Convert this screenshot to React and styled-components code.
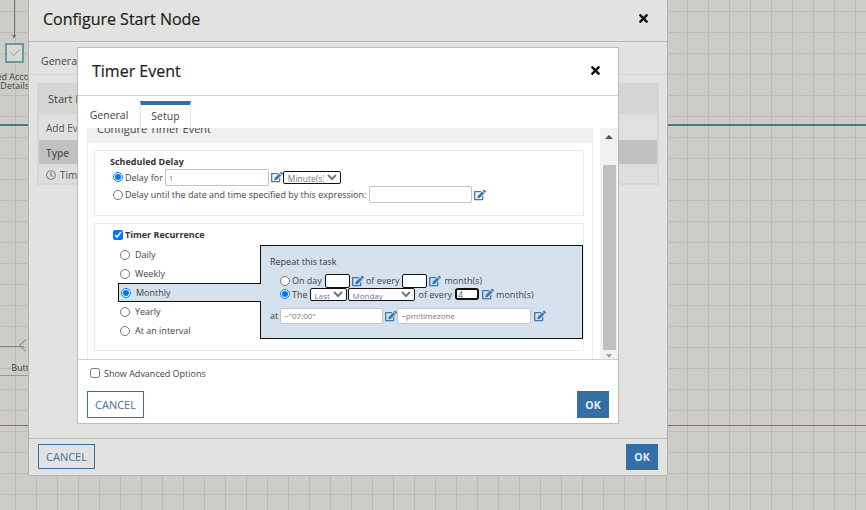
import { createGlobalStyle, styled } from 'styled-components';
import { FaEdit, FaTimes, FaRegClock } from 'react-icons/fa';
import { Check as CheckMark } from 'lucide-react';

const GlobalStyle = createGlobalStyle`
  html, body { margin: 0; padding: 0; height: 100%; overflow: hidden; }
  body { font-family: "Open Sans", "Noto Sans", sans-serif; color: #333; }
`;

const Canvas = styled.div`
  position: relative;
  width: 866px;
  height: 510px;
  overflow: hidden;
  background-color: #cdccc8;
  background-image:
    linear-gradient(to right, #bcbbb7 1px, transparent 1px),
    linear-gradient(to bottom, #bcbbb7 1px, transparent 1px);
  background-size: 21px 21px;
  background-position: 15px 11px;
`;

const Wire = styled.div`
  position: absolute;
  left: 0;
  right: 0;
  top: ${(p) => p.$top}px;
  height: ${(p) => p.$size}px;
  background: ${(p) => p.$color};
`;

const ArrowLine = styled.div`
  position: absolute;
  left: 14px;
  top: 0;
  width: 1px;
  height: 36px;
  background: #777;
  &::after {
    content: '';
    position: absolute;
    left: -2px;
    bottom: -3px;
    border-left: 2.5px solid transparent;
    border-right: 2.5px solid transparent;
    border-top: 4px solid #777;
  }
`;

const TaskNode = styled.div`
  position: absolute;
  left: 5px;
  top: 43px;
  width: 19px;
  height: 20px;
  box-sizing: border-box;
  border: 2px solid #6e98a3;
  background: #d8d8d4;
  display: flex;
  align-items: center;
  justify-content: center;
  color: #6e98a3;
`;

const NodeLabel = styled.div`
  position: absolute;
  right: ${866 - 29}px;
  top: ${(p) => p.$top}px;
  font-size: 9px;
  line-height: 9px;
  white-space: nowrap;
  color: #444;
`;

const ButtonWire = styled.div`
  position: absolute;
  left: 0;
  top: 346px;
  width: 24px;
  height: 1px;
  background: #888;
  &::after {
    content: '';
    position: absolute;
    right: -6px;
    top: -5px;
    width: 9px;
    height: 9px;
    box-sizing: border-box;
    border-left: 1px solid #888;
    border-bottom: 1px solid #888;
    transform: rotate(45deg);
  }
`;

const ButtonUnderline = styled.div`
  position: absolute;
  left: 0;
  top: 375px;
  width: 29px;
  height: 1px;
  background: #999;
`;

const OuterDialog = styled.section`
  position: absolute;
  left: 28px;
  top: -1px;
  width: 640px;
  height: 477px;
  box-sizing: border-box;
  border: 1px solid #b4b4b2;
  background: #e2e2e0;
  display: flex;
  flex-direction: column;
`;

const OuterHeader = styled.header`
  height: 42px;
  flex: none;
  box-sizing: border-box;
  border-bottom: 1px solid #b9b9b7;
  padding: 0 17px 4px 14px;
  display: flex;
  align-items: center;
  justify-content: space-between;
`;

const DialogTitle = styled.h2`
  margin: 0;
  font-size: 16px;
  font-weight: 400;
  color: #222;
  -webkit-text-stroke: 0.2px #222;
`;

const CloseIcon = styled.span`
  display: flex;
  color: #111;
  font-size: 13px;
`;

const OuterTabs = styled.div`
  height: 33px;
  flex: none;
  box-sizing: border-box;
  border-bottom: 1px solid #d2d2d0;
  padding: 6px 0 0 12px;
  font-size: 10.5px;
  line-height: 27px;
  color: #444;
`;

const OuterBody = styled.div`
  flex: 1;
  padding: 8px 8px 0;
`;

const EventsPanel = styled.div`
  height: 102px;
  box-sizing: border-box;
  background: #d5d5d3;
  padding: 0 2px 2px;
  display: flex;
  flex-direction: column;
  font-size: 10px;
  color: #555;
`;

const EventsTitle = styled.div`
  height: 31px;
  line-height: 31px;
  padding-left: 9px;
  font-size: 11px;
  color: #444;
`;

const EventsRow = styled.div`
  height: ${(p) => p.$height}px;
  flex: none;
  box-sizing: border-box;
  padding-top: ${(p) => p.$pad}px;
  display: flex;
  align-items: center;
  gap: 4px;
  padding-left: 7px;
  background: ${(p) => p.$bg};
  font-weight: ${(p) => (p.$bold ? 600 : 400)};
  svg { color: #777; font-size: 10px; }
`;

const OuterFooter = styled.footer`
  height: 37px;
  flex: none;
  box-sizing: border-box;
  border-top: 1px solid #bcbcba;
  padding: 5px 9px 0 9px;
  display: flex;
  justify-content: space-between;
  align-items: flex-start;
`;

const CancelButton = styled.button`
  width: 57px;
  height: ${(p) => p.$height}px;
  box-sizing: border-box;
  padding: 0;
  border: 1px solid #336ea5;
  background: transparent;
  color: #476f98;
  font-family: inherit;
  font-size: 11px;
`;

const OkButton = styled.button`
  width: 32px;
  height: ${(p) => p.$height}px;
  padding: 0;
  border: 0;
  background: #336ea5;
  color: #e6eef5;
  font-family: inherit;
  font-size: 10.5px;
  font-weight: 700;
`;

const InnerDialog = styled.section`
  position: absolute;
  left: 77px;
  top: 47px;
  width: 542px;
  height: 377px;
  box-sizing: border-box;
  border: 1px solid #bcbcbc;
  background: #fff;
  display: flex;
  flex-direction: column;
`;

const InnerHeader = styled.header`
  height: 48px;
  flex: none;
  box-sizing: border-box;
  border-bottom: 1px solid #cfcfcf;
  padding: 0 16px 2px 14px;
  display: flex;
  align-items: center;
  justify-content: space-between;
`;

const TabRow = styled.nav`
  height: 32px;
  flex: none;
  display: flex;
  align-items: flex-end;
  font-size: 10.5px;
  color: #444;
`;

const Tab = styled.div`
  box-sizing: border-box;
  height: 27px;
  width: ${(p) => p.$width}px;
  text-align: center;
  line-height: ${(p) => (p.$active ? 22 : 29)}px;
  border-top: ${(p) => (p.$active ? '4px solid #336ea5' : '0')};
  border-left: ${(p) => (p.$active ? '1px solid #e4e4e4' : '0')};
  border-right: ${(p) => (p.$active ? '1px solid #e4e4e4' : '0')};
`;

const ScrollFrame = styled.div`
  height: 232px;
  flex: none;
  box-sizing: border-box;
  border-bottom: 1px solid #cfcfcf;
  display: flex;
  overflow: hidden;
  padding-left: 9px;
`;

const ScrollContent = styled.div`
  width: 506px;
  flex: none;
  box-sizing: border-box;
  border-left: 1px solid #eee;
  border-right: 1px solid #eee;
  overflow: hidden;
`;

const SectionHeading = styled.div`
  height: 23px;
  margin-top: -8px;
  line-height: 17px;
  padding-left: 9px;
  background: #f0f0f0;
  font-size: 11px;
  color: #444;
`;

const SectionBody = styled.div`
  padding: 7px 8px 0 6px;
  display: flex;
  flex-direction: column;
  gap: 7px;
`;

const Box = styled.div`
  height: ${(p) => p.$height}px;
  box-sizing: border-box;
  border: 1px solid #ececec;
`;

const BoxTitle = styled.div`
  padding-left: ${(p) => p.$indent}px;
  padding-top: ${(p) => p.$top}px;
  font-size: 9px;
  line-height: 12px;
  font-weight: 700;
  color: #333;
  display: flex;
  align-items: center;
  gap: 2px;
`;

const FieldRow = styled.div`
  height: ${(p) => p.$height}px;
  padding-left: ${(p) => p.$indent || 0}px;
  margin-top: ${(p) => p.$top || 0}px;
  display: flex;
  align-items: center;
  font-size: 9px;
  color: #444;
  white-space: nowrap;
`;

const Radio = styled.input.attrs({ type: 'radio' })`
  width: 10px;
  height: 10px;
  margin: 0 2px 0 0;
  flex: none;
`;

const Check = styled.input.attrs({ type: 'checkbox' })`
  width: 10px;
  height: 10px;
  margin: 0;
  flex: none;
`;

const TextField = styled.input.attrs({ type: 'text' })`
  box-sizing: border-box;
  width: ${(p) => p.$width}px;
  height: ${(p) => p.$height}px;
  margin-left: ${(p) => p.$left || 0}px;
  padding: 0 3px;
  border: 1px solid #c4c4c4;
  border-radius: 2px;
  background: #fff;
  font-family: inherit;
  font-size: 8px;
  color: #777;
  outline: none;
`;

const BlackField = styled(TextField)`
  border: 1px solid #111;
`;

const FocusField = styled(TextField)`
  border: 2px solid #111;
  border-radius: 3px;
  padding: 0 1px;
  font-size: 9px;
  color: #666;
`;

const EditIcon = styled.span`
  display: flex;
  margin-left: ${(p) => p.$left || 2}px;
  color: #3f79ad;
  font-size: 12px;
`;

const NativeSelect = styled.select`
  box-sizing: border-box;
  width: ${(p) => p.$width}px;
  height: ${(p) => p.$height}px;
  margin-left: ${(p) => p.$left || 0}px;
  margin-top: ${(p) => p.$top || 0}px;
  padding: 0;
  border: 1px solid #111;
  border-radius: 2px;
  background: #fff;
  font-family: inherit;
  font-size: ${(p) => p.$font || 8}px;
  color: #777;
`;

const RecurrenceBody = styled.div`
  display: flex;
  margin-top: 4px;
`;

const OptionList = styled.div`
  width: 165px;
  flex: none;
  padding-left: 23px;
  box-sizing: border-box;
`;

const Option = styled.label`
  position: relative;
  z-index: 1;
  box-sizing: border-box;
  width: ${(p) => (p.$active ? 143 : 120)}px;
  height: 19px;
  padding-left: 2px;
  display: flex;
  align-items: center;
  font-size: 9px;
  color: #444;
  ${(p) =>
    p.$active &&
    `
    background: #d5e2ee;
    border: 1px solid #111;
    border-right: 0;
  `}
  ${Radio} { margin-right: 5px; }
`;

const RepeatPanel = styled.div`
  width: 323px;
  height: 94px;
  flex: none;
  box-sizing: border-box;
  border: 1px solid #111;
  background: #d5e2ee;
  padding: 10px 9px 0;
`;

const RepeatTitle = styled.div`
  font-size: 9px;
  line-height: 12px;
  color: #333;
  margin-bottom: 5px;
`;

const Gap = styled.span`
  margin-left: ${(p) => p.$size}px;
`;

const Scrollbar = styled.div`
  width: 18px;
  flex: none;
  margin-left: 7px;
  background: #f1f1f1;
  display: flex;
  flex-direction: column;
  align-items: center;
`;

const ArrowUp = styled.div`
  width: 0;
  height: 0;
  margin-top: 7px;
  border-left: 4px solid transparent;
  border-right: 4px solid transparent;
  border-bottom: 4px solid #505050;
`;

const ArrowDown = styled.div`
  width: 0;
  height: 0;
  margin-top: 4px;
  border-left: 3.5px solid transparent;
  border-right: 3.5px solid transparent;
  border-top: 4px solid #a0a0a0;
`;

const Thumb = styled.div`
  width: 13px;
  height: 185px;
  margin-top: 26px;
  background: #c0c0c0;
`;

const AdvancedRow = styled.label`
  height: 26px;
  flex: none;
  padding-left: 12px;
  display: flex;
  align-items: center;
  gap: 4px;
  font-size: 9px;
  color: #444;
`;

const InnerFooter = styled.footer`
  padding: 5px 9px 0 9px;
  display: flex;
  justify-content: space-between;
`;

function Edit(props) {
  return (
    <EditIcon {...props}>
      <FaEdit />
    </EditIcon>
  );
}

export default function App() {
  return (
    <>
      <GlobalStyle />
      <Canvas>
        <Wire $top={124} $size={2} $color="#3a8080" />
        <Wire $top={425} $size={1} $color="#3d82bb" />
        <ArrowLine />
        <TaskNode>
          <CheckMark size={12} strokeWidth={1.6} />
        </TaskNode>
        <NodeLabel $top={72}>ed Acco</NodeLabel>
        <NodeLabel $top={81}>Details</NodeLabel>
        <ButtonWire />
        <NodeLabel $top={363}>Butt</NodeLabel>
        <ButtonUnderline />

        <OuterDialog>
          <OuterHeader>
            <DialogTitle>Configure Start Node</DialogTitle>
            <CloseIcon>
              <FaTimes />
            </CloseIcon>
          </OuterHeader>
          <OuterTabs>General</OuterTabs>
          <OuterBody>
            <EventsPanel>
              <EventsTitle>Start Events</EventsTitle>
              <EventsRow $height={26} $pad={1} $bg="#e0e0de">Add Event</EventsRow>
              <EventsRow $height={24} $pad={1} $bg="#c1c1c0" $bold>Type</EventsRow>
              <EventsRow $height={19} $pad={2} $bg="#dededc">
                <FaRegClock />
                Timer
              </EventsRow>
            </EventsPanel>
          </OuterBody>
          <OuterFooter>
            <CancelButton $height={25}>CANCEL</CancelButton>
            <OkButton $height={26}>OK</OkButton>
          </OuterFooter>
        </OuterDialog>

        <InnerDialog>
          <InnerHeader>
            <DialogTitle>Timer Event</DialogTitle>
            <CloseIcon>
              <FaTimes />
            </CloseIcon>
          </InnerHeader>
          <TabRow>
            <Tab $width={62}>General</Tab>
            <Tab $active $width={51}>Setup</Tab>
          </TabRow>
          <ScrollFrame>
            <ScrollContent>
              <SectionHeading>Configure Timer Event</SectionHeading>
              <SectionBody>
                <Box $height={66}>
                  <BoxTitle $indent={15} $top={5}>Scheduled Delay</BoxTitle>
                  <FieldRow $height={18} $indent={18}>
                    <Radio name="delay" defaultChecked />
                    Delay for
                    <TextField $width={104} $height={17} $left={2} defaultValue="1" />
                    <Edit />
                    <NativeSelect $width={58} $height={13} $top={1} $font={8.5} defaultValue="Minute(s)">
                      <option>Minute(s)</option>
                    </NativeSelect>
                  </FieldRow>
                  <FieldRow $height={17} $indent={18}>
                    <Radio name="delay" />
                    Delay until the date and time specified by this expression:
                    <TextField $width={103} $height={17} $left={3} />
                    <Edit />
                  </FieldRow>
                </Box>
                <Box $height={128}>
                  <BoxTitle $indent={18} $top={5}>
                    <Check defaultChecked />
                    Timer Recurrence
                  </BoxTitle>
                  <RecurrenceBody>
                    <OptionList>
                      <Option><Radio name="freq" />Daily</Option>
                      <Option><Radio name="freq" />Weekly</Option>
                      <Option $active><Radio name="freq" defaultChecked />Monthly</Option>
                      <Option><Radio name="freq" />Yearly</Option>
                      <Option><Radio name="freq" />At an interval</Option>
                    </OptionList>
                    <RepeatPanel>
                      <RepeatTitle>Repeat this task</RepeatTitle>
                      <FieldRow $height={15} $indent={10}>
                        <Radio name="monthly" />
                        On day
                        <BlackField $width={25} $height={14} $left={3} />
                        <Edit />
                        <Gap $size={2}>of every</Gap>
                        <BlackField $width={25} $height={14} $left={3} />
                        <Edit />
                        <Gap $size={3}>month(s)</Gap>
                      </FieldRow>
                      <FieldRow $height={14} $indent={10} $top={-1}>
                        <Radio name="monthly" defaultChecked />
                        The
                        <NativeSelect $width={37} $height={13} $left={2} defaultValue="Last">
                          <option>Last</option>
                        </NativeSelect>
                        <NativeSelect $width={67} $height={13} $left={1} defaultValue="Monday">
                          <option>Monday</option>
                        </NativeSelect>
                        <Gap $size={4}>of every</Gap>
                        <FocusField $width={24} $height={12} $left={3} defaultValue="4" />
                        <Edit $left={3} />
                        <Gap $size={2}>month(s)</Gap>
                      </FieldRow>
                      <FieldRow $height={17} $top={6}>
                        at
                        <TextField $width={103} $height={16} $left={2} defaultValue={'~"07:00"'} />
                        <Edit />
                        <TextField $width={134} $height={16} defaultValue="~pm!timezone" />
                        <Edit $left={3} />
                      </FieldRow>
                    </RepeatPanel>
                  </RecurrenceBody>
                </Box>
              </SectionBody>
            </ScrollContent>
            <Scrollbar>
              <ArrowUp />
              <Thumb />
              <ArrowDown />
            </Scrollbar>
          </ScrollFrame>
          <AdvancedRow>
            <Check />
            Show Advanced Options
          </AdvancedRow>
          <InnerFooter>
            <CancelButton $height={27}>CANCEL</CancelButton>
            <OkButton $height={27}>OK</OkButton>
          </InnerFooter>
        </InnerDialog>
      </Canvas>
    </>
  );
}
